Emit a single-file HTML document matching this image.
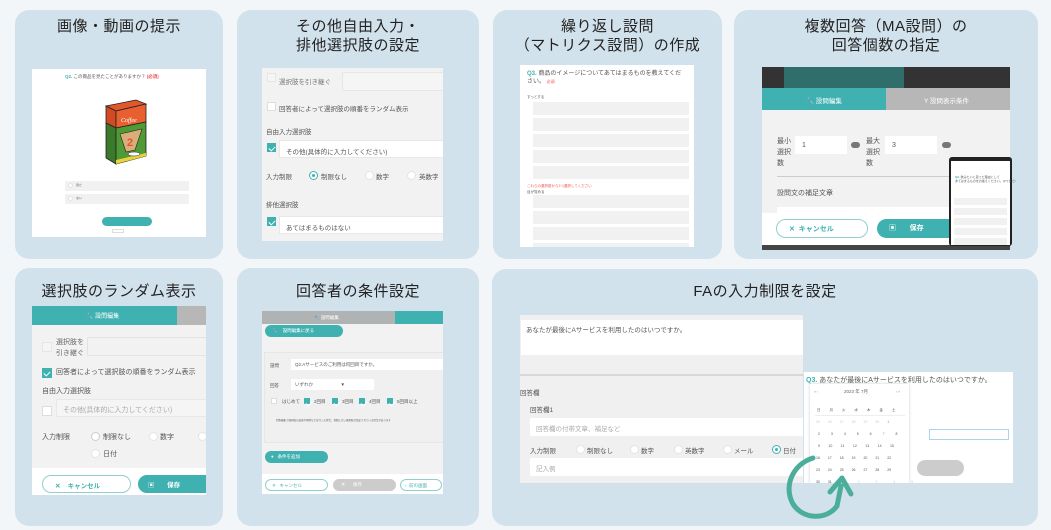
<!DOCTYPE html>
<html><head><meta charset="utf-8">
<style>
*{margin:0;padding:0;box-sizing:border-box}
body{width:1051px;height:530px;overflow:hidden;background:#f3f6f8;font-family:"Liberation Sans","Noto Sans CJK JP",sans-serif;position:relative;color:#444}
div,span{position:absolute}
.card{background:#d2e2ec;border-radius:14px}
.t{font-size:15px;color:#222;white-space:nowrap;text-align:center;line-height:19px;letter-spacing:.5px}
.s{white-space:nowrap;color:#555}
.cb{width:9px;height:9px;border:1px solid #ddd;background:#fff}
.cbt{background:#3fb1b0;border-color:#3fb1b0}
.cbt::after{content:"";position:absolute;left:2px;top:1px;width:3px;height:5px;border:solid #fff;border-width:0 1px 1px 0;transform:rotate(45deg)}
.rd{width:9px;height:9px;border-radius:50%;background:#fff;border:1px solid #e4e4e4}
.rds{border:1px solid #3fb1b0}
.rds::after{content:"";position:absolute;left:2px;top:2px;width:3px;height:3px;border-radius:50%;background:#3fb1b0}
.in{background:#fff;border:1px solid #e8e8e8}
.row{background:#f1f1f1}
.teal{background:#3fb1b0}
</style></head><body>

<!-- cards -->
<div class="card" style="left:15px;top:10px;width:208px;height:249px"></div>
<div class="card" style="left:237px;top:10px;width:242px;height:249px"></div>
<div class="card" style="left:493px;top:10px;width:229px;height:249px"></div>
<div class="card" style="left:734px;top:10px;width:304px;height:249px"></div>
<div class="card" style="left:15px;top:268px;width:208px;height:258px"></div>
<div class="card" style="left:237px;top:268px;width:242px;height:258px"></div>
<div class="card" style="left:492px;top:269px;width:546px;height:257px"></div>

<!-- titles -->
<div class="t" style="left:15px;width:208px;top:17px">画像・動画の提示</div>
<div class="t" style="left:237px;width:242px;top:17px">その他自由入力・<br>排他選択肢の設定</div>
<div class="t" style="left:493px;width:229px;top:17px">繰り返し設問<br>（マトリクス設問）の作成</div>
<div class="t" style="left:734px;width:304px;top:17px">複数回答（MA設問）の<br>回答個数の指定</div>
<div class="t" style="left:15px;width:208px;top:282px">選択肢のランダム表示</div>
<div class="t" style="left:237px;width:242px;top:282px">回答者の条件設定</div>
<div class="t" style="left:492px;width:546px;top:282px">FAの入力制限を設定</div>

<!-- card1 content -->
<div style="left:32px;top:69px;width:174px;height:168px;background:#fff">
  <span class="s" style="left:33px;top:5px;font-size:4.5px;color:#555"><b style="color:#3fb1b0">Q2.</b> この商品を見たことがありますか？ <b style="color:#e55">(必須)</b></span>
  <svg style="position:absolute;left:70px;top:29px" width="50" height="70" viewBox="0 0 50 70">
    <polygon points="4,8 34,2 44,6 14,13" fill="#e2572c" stroke="#222" stroke-width="0.8"/>
    <polygon points="4,8 14,13 14,30 4,25" fill="#d24a22" stroke="#222" stroke-width="0.8"/>
    <polygon points="14,13 44,6 44,24 14,30" fill="#e8602f" stroke="#222" stroke-width="0.8"/>
    <text x="19" y="24" font-size="6" fill="#fff" font-style="italic" font-family="Liberation Serif">Coffee</text>
    <polygon points="4,25 14,30 14,66 4,60" fill="#3a7a2a" stroke="#222" stroke-width="0.8"/>
    <polygon points="14,30 44,24 44,58 14,66" fill="#4f9a34" stroke="#222" stroke-width="0.8"/>
    <polygon points="18,36 40,31 33,52 24,54" fill="#d9ae7a" stroke="#222" stroke-width="0.6"/>
    <text x="25" y="48" font-size="11" fill="#e2572c" font-weight="bold">2</text>
    <polygon points="14,62 44,55 44,58 14,66" fill="#e9d23a"/>
    <ellipse cx="32" cy="56" rx="6" ry="2" fill="#fff" stroke="#222" stroke-width=".5"/>
  </svg>
  <div class="row" style="left:33px;top:112px;width:124px;height:10px"><span class="rd" style="left:3px;top:2px;width:5px;height:5px"></span><span class="s" style="left:11px;top:2px;font-size:3px">見た</span></div>
  <div class="row" style="left:33px;top:125px;width:124px;height:10px"><span class="rd" style="left:3px;top:2px;width:5px;height:5px"></span><span class="s" style="left:11px;top:2px;font-size:3px">ない</span></div>
  <div class="teal" style="left:70px;top:148px;width:50px;height:9px;border-radius:5px"></div>
  <div style="left:80px;top:160px;width:12px;height:4px;border:1px solid #ddd"></div>
</div>

<!-- card2 content -->
<div style="left:262px;top:68px;width:181px;height:173px;background:#f2f2f2;overflow:hidden;font-size:6.5px">
  <span class="cb" style="left:5px;top:5px;border-color:#e6e6e6;background:#f5f5f5"></span>
  <span class="s" style="left:17px;top:8px;color:#777">選択肢を引き継ぐ</span>
  <span style="left:80px;top:4px;width:110px;height:19px;border:1px solid #e6e6e6;border-radius:2px;background:#f5f5f5"></span>
  <span class="cb" style="left:5px;top:34px"></span>
  <span class="s" style="left:17px;top:35px">回答者によって選択肢の順番をランダム表示</span>
  <span class="s" style="left:4px;top:58px">自由入力選択肢</span>
  <span class="cb cbt" style="left:5px;top:75px"></span>
  <span class="in" style="left:17px;top:72px;width:170px;height:18px"></span>
  <span class="s" style="left:24px;top:78px">その他(具体的に入力してください)</span>
  <span class="s" style="left:4px;top:103px">入力制限</span>
  <span class="rd rds" style="left:47px;top:103px"></span><span class="s" style="left:59px;top:103px">制限なし</span>
  <span class="rd" style="left:103px;top:103px"></span><span class="s" style="left:114px;top:103px">数字</span>
  <span class="rd" style="left:145px;top:103px"></span><span class="s" style="left:157px;top:103px">英数字</span>
  <span class="s" style="left:4px;top:131px">排他選択肢</span>
  <span class="cb cbt" style="left:5px;top:149px"></span>
  <span class="in" style="left:17px;top:148px;width:170px;height:18px"></span>
  <span class="s" style="left:24px;top:154px">あてはまるものはない</span>
</div>

<!-- card3 content -->
<div style="left:520px;top:65px;width:174px;height:182px;background:#fff;overflow:hidden;font-size:5.5px">
  <span class="s" style="left:7px;top:3px;font-size:6px"><b style="color:#3fb1b0">Q3.</b> 商品のイメージについてあてはまるものを教えてくだ</span>
  <span class="s" style="left:7px;top:11px;font-size:6px">さい。 <span style="position:static;color:#e55;font-size:4px">必須</span></span>
  <span class="s" style="left:7px;top:30px;font-size:3.5px">すっとする</span>
  <div class="row" style="left:13px;top:37px;width:156px;height:13px"></div>
  <div class="row" style="left:13px;top:53px;width:156px;height:13px"></div>
  <div class="row" style="left:13px;top:69px;width:156px;height:13px"></div>
  <div class="row" style="left:13px;top:85px;width:156px;height:13px"></div>
  <div class="row" style="left:13px;top:101px;width:156px;height:13px"></div>
  <span class="s" style="left:7px;top:119px;font-size:3.5px;color:#e55">これらの選択肢から2つ選択してください</span>
  <span class="s" style="left:7px;top:125px;font-size:3.5px">目が覚める</span>
  <div class="row" style="left:13px;top:130px;width:156px;height:13px"></div>
  <div class="row" style="left:13px;top:146px;width:156px;height:13px"></div>
  <div class="row" style="left:13px;top:162px;width:156px;height:13px"></div>
  <div class="row" style="left:13px;top:178px;width:156px;height:13px"></div>
</div>
<div style="left:533px;top:102px;width:1px;height:1px">
</div>

<!-- card4 content -->
<div style="left:762px;top:67px;width:248px;height:183px;background:#f2f2f2;overflow:hidden;font-size:7px">
  <div style="left:0;top:0;width:248px;height:22px;background:#333"></div>
  <div style="left:22px;top:0;width:120px;height:22px;background:#2f6e6a"></div>
  <div style="left:0;top:21px;width:124px;height:22px" class="teal"><span style="left:44px;top:7px;color:#fff;font-size:6.5px">🔧 設問編集</span></div>
  <div style="left:124px;top:21px;width:124px;height:22px;background:#b7b7b7"><span style="left:38px;top:7px;color:#fff;font-size:6.5px">Y 設問表示条件</span></div>
  <span class="s" style="left:15px;top:69px;line-height:11px">最小<br>選択<br>数</span>
  <span class="in" style="left:33px;top:69px;width:52px;height:18px;border:none"></span><span class="s" style="left:40px;top:75px">1</span>
  <span style="left:89px;top:75px;width:9px;height:6px;border-radius:3px;background:#777"></span>
  <span class="s" style="left:104px;top:69px;line-height:11px">最大<br>選択<br>数</span>
  <span class="in" style="left:123px;top:69px;width:52px;height:18px;border:none"></span><span class="s" style="left:130px;top:75px">3</span>
  <span style="left:180px;top:75px;width:9px;height:6px;border-radius:3px;background:#777"></span>
  <div style="left:15px;top:109px;width:233px;height:1px;background:#ccc"></div>
  <span class="s" style="left:15px;top:121px">設問文の補足文章</span>
  <div style="left:15px;top:140px;width:233px;height:10px;background:#fff"></div>
  <div style="left:0;top:146px;width:248px;height:32px;background:#fff"></div>
  <div style="left:14px;top:152px;width:92px;height:19px;border:1px solid #8fd0cf;border-radius:10px"><span style="left:12px;top:4px;color:#3fb1b0;font-weight:bold;font-size:7px">✕ &nbsp;キャンセル</span></div>
  <div class="teal" style="left:115px;top:152px;width:90px;height:19px;border-radius:10px"><span style="left:12px;top:4px;color:#fff;font-weight:bold;font-size:7px">▣ &nbsp; &nbsp; &nbsp; 保存</span></div>
  <div style="left:0;top:178px;width:248px;height:5px;background:#444"></div>
</div>
<div style="left:949px;top:157px;width:63px;height:89px;background:#222;border-radius:3px">
  <div style="left:2px;top:4px;width:59px;height:84px;background:#fff;font-size:3px">
    <span class="s" style="left:4px;top:14px;line-height:4px"><b style="color:#3fb1b0">Q2.</b> 飲みたいと思った理由として<br>あてはまるものをお答えください。(3つまで)</span>
    <div class="row" style="left:3px;top:37px;width:53px;height:7px"></div>
    <div class="row" style="left:3px;top:47px;width:53px;height:7px"></div>
    <div class="row" style="left:3px;top:57px;width:53px;height:7px"></div>
    <div class="row" style="left:3px;top:67px;width:53px;height:7px"></div>
    <div class="row" style="left:3px;top:77px;width:53px;height:7px"></div>
  </div>
</div>

<!-- card5 content -->
<div style="left:32px;top:306px;width:174px;height:189px;background:#f2f2f2;overflow:hidden;font-size:7px">
  <div class="teal" style="left:0;top:0;width:145px;height:19px"><span style="left:54px;top:5px;color:#fff;font-size:6px">🔧 設問編集</span></div>
  <div style="left:145px;top:0;width:29px;height:19px;background:#b7b7b7"></div>
  <span class="cb" style="left:10px;top:36px;border-color:#e6e6e6;background:#f5f5f5;width:10px;height:10px"></span>
  <span class="s" style="left:24px;top:31px;line-height:11px;color:#666">選択肢を<br>引き継ぐ</span>
  <span style="left:55px;top:31px;width:130px;height:19px;border:1px solid #e3e3e3;border-radius:2px"></span>
  <span class="cb cbt" style="left:10px;top:62px;width:10px;height:10px"></span>
  <span class="s" style="left:24px;top:61px">回答者によって選択肢の順番をランダム表示</span>
  <span class="s" style="left:10px;top:80px">自由入力選択肢</span>
  <span class="cb" style="left:10px;top:100px;width:10px;height:10px"></span>
  <span class="in" style="left:24px;top:93px;width:155px;height:18px;background:#f5f5f5"></span>
  <span class="s" style="left:31px;top:99px;color:#aaa">その他(具体的に入力してください)</span>
  <span class="s" style="left:10px;top:126px">入力制限</span>
  <span class="rd" style="left:59px;top:126px;border-color:#ccc"></span><span class="s" style="left:71px;top:126px">制限なし</span>
  <span class="rd" style="left:117px;top:126px"></span><span class="s" style="left:128px;top:126px">数字</span>
  <span class="rd" style="left:166px;top:126px"></span>
  <span class="rd" style="left:59px;top:143px"></span><span class="s" style="left:71px;top:143px">日付</span>
  <div style="left:0;top:162px;width:174px;height:27px;background:#fff"></div>
  <div style="left:10px;top:169px;width:89px;height:18px;border:1px solid #8fd0cf;border-radius:9px"><span style="left:12px;top:4px;color:#3fb1b0;font-weight:bold;font-size:6.5px">✕ &nbsp; &nbsp;キャンセル</span></div>
  <div class="teal" style="left:106px;top:169px;width:80px;height:18px;border-radius:9px"><span style="left:10px;top:4px;color:#fff;font-weight:bold;font-size:6.5px">▣ &nbsp; &nbsp; &nbsp; 保存</span></div>
</div>

<!-- card6 content -->
<div style="left:262px;top:311px;width:181px;height:183px;background:#f2f2f2;overflow:hidden;font-size:4.5px">
  <div style="left:0;top:0;width:133px;height:13px;background:#b0b3b3"><span style="left:52px;top:4px;color:#fff">🔧 設問編集</span></div>
  <div class="teal" style="left:133px;top:0;width:48px;height:13px"></div>
  <div class="teal" style="left:3px;top:14px;width:78px;height:12px;border-radius:6px"><span style="left:7px;top:3px;color:#fff">🔧 &nbsp; &nbsp;設問編集に戻る</span></div>
  <div style="left:2px;top:41px;width:181px;height:91px;border:1px solid #e6e6e6;background:#f0f0f0"></div>
  <span class="s" style="left:8px;top:52px">設問</span>
  <span class="in" style="left:29px;top:48px;width:155px;height:11px;border:none"></span><span class="s" style="left:33px;top:51px">Q2.Aサービスのご利用は何回目ですか。</span>
  <span class="s" style="left:8px;top:72px">回答</span>
  <span class="in" style="left:29px;top:68px;width:83px;height:11px;border:none"></span><span class="s" style="left:33px;top:71px">いずれか &nbsp; &nbsp; &nbsp; &nbsp; &nbsp; &nbsp; &nbsp; &nbsp; &nbsp; &nbsp; &nbsp;▼</span>
  <span class="cb" style="left:9px;top:87px;width:6px;height:6px"></span><span class="s" style="left:20px;top:88px">はじめて</span>
  <span class="cb cbt" style="left:42px;top:87px;width:6px;height:6px"></span><span class="s" style="left:52px;top:88px">2回目</span>
  <span class="cb cbt" style="left:70px;top:87px;width:6px;height:6px"></span><span class="s" style="left:80px;top:88px">3回目</span>
  <span class="cb cbt" style="left:97px;top:87px;width:6px;height:6px"></span><span class="s" style="left:107px;top:88px">4回目</span>
  <span class="cb cbt" style="left:125px;top:87px;width:6px;height:6px"></span><span class="s" style="left:135px;top:88px">5回目以上</span>
  <span class="s" style="left:14px;top:107px;font-size:2.5px">回答編集で選択肢の変更や削除などを行った場合、意図しない選択肢が設定されている場合があります</span>
  <div class="teal" style="left:3px;top:140px;width:63px;height:12px;border-radius:6px"><span style="left:6px;top:3px;color:#fff">● &nbsp; 条件を追加</span></div>
  <div style="left:0;top:163px;width:181px;height:20px;background:#fff"></div>
  <div style="left:3px;top:168px;width:63px;height:12px;border:1px solid #8fd0cf;border-radius:6px"><span style="left:6px;top:3px;color:#3fb1b0">✕ &nbsp; キャンセル</span></div>
  <div style="left:71px;top:168px;width:63px;height:12px;background:#ccc;border-radius:6px"><span style="left:8px;top:3px;color:#fff">▣ &nbsp; &nbsp; &nbsp;保存</span></div>
  <div style="left:138px;top:168px;width:42px;height:12px;border:1px solid #8fd0cf;border-radius:6px"><span style="left:4px;top:3px;color:#3fb1b0">‹ &nbsp;前の画面</span></div>
</div>

<!-- card7 content -->
<div style="left:520px;top:315px;width:283px;height:168px;background:#f0f0f0;overflow:hidden;font-size:6.5px">
  <div style="left:1px;top:5px;width:282px;height:35px;background:#fff"></div>
  <span class="s" style="left:6px;top:9px">あなたが最後にAサービスを利用したのはいつですか。</span>
  <div style="left:0;top:59px;width:283px;height:2px;background:#d8d8d8"></div>
  <span class="s" style="left:0;top:72px">回答欄</span>
  <span class="s" style="left:10px;top:89px">回答欄1</span>
  <span class="in" style="left:10px;top:103px;width:275px;height:18px;border:none"></span>
  <span class="s" style="left:16px;top:108px;color:#aaa">回答欄の付帯文章、補足など</span>
  <span class="s" style="left:10px;top:130px">入力制限</span>
  <span class="rd" style="left:56px;top:130px"></span><span class="s" style="left:67px;top:130px">制限なし</span>
  <span class="rd" style="left:110px;top:130px"></span><span class="s" style="left:121px;top:130px">数字</span>
  <span class="rd" style="left:154px;top:130px"></span><span class="s" style="left:165px;top:130px">英数字</span>
  <span class="rd" style="left:203px;top:130px"></span><span class="s" style="left:214px;top:130px">メール</span>
  <span class="rd rds" style="left:252px;top:130px"></span><span class="s" style="left:263px;top:130px">日付</span>
  <span class="in" style="left:10px;top:143px;width:275px;height:18px;border:none"></span>
  <span class="s" style="left:16px;top:148px;color:#aaa">記入例</span>
</div>
<div style="left:804px;top:372px;width:209px;height:111px;background:#fff;overflow:hidden;font-size:7px">
  <span class="s" style="left:2px;top:3px"><b style="color:#3fb1b0">Q3.</b> あなたが最後にAサービスを利用したのはいつですか。</span>
  <div style="left:125px;top:57px;width:80px;height:11px;border:1px solid #aad4ee"></div>
  <div style="left:113px;top:88px;width:47px;height:16px;border-radius:8px;background:#ccc"></div>
  <div style="left:6px;top:12px;width:99px;height:100px;background:#fff;box-shadow:0 0 3px rgba(0,0,0,.2);font-size:3.5px;color:#888">
    <span class="s" style="left:4px;top:6px;color:#999">« ‹</span>
    <span class="s" style="left:34px;top:5px;font-size:4.5px;color:#666">2023 年 7月</span>
    <span class="s" style="left:86px;top:6px;color:#999">› »</span>
    <span class="s" style="left:7px;top:24px;word-spacing:8px">日 月 火 水 木 金 土</span>
    <div style="left:5px;top:31px;width:90px;height:1px;background:#eee"></div>
    <span class="s" style="left:6px;top:36px;color:#ccc;word-spacing:7px">25 26 27 28 29 30 <span style="position:static;color:#888">1</span></span>
    <span class="s" style="left:8px;top:48px;word-spacing:10px">2 3 4 5 6 <span style="position:static;color:#4a9ee0">7</span> 8</span>
    <span class="s" style="left:8px;top:60px;word-spacing:7.5px">9 10 11 12 13 14 15</span>
    <span class="s" style="left:6px;top:72px;word-spacing:7px">16 17 18 19 20 21 22</span>
    <span class="s" style="left:6px;top:84px;word-spacing:7px">23 24 25 26 27 28 29</span>
    <span class="s" style="left:6px;top:96px;word-spacing:7px">30 31 <span style="position:static;color:#ccc">1 &nbsp;2 &nbsp;3 &nbsp;4 &nbsp;5</span></span>
  </div>
</div>
<svg style="position:absolute;left:775px;top:450px" width="80" height="75" viewBox="0 0 80 75">
  <path d="M38 8 C18 14 8 36 18 54 C28 70 52 70 62 56 L66 36" fill="none" stroke="#4aae9b" stroke-width="5" stroke-linecap="round"/>
  <path d="M55 42 L67 28 L76 44" fill="none" stroke="#4aae9b" stroke-width="5" stroke-linecap="round" stroke-linejoin="round"/>
</svg>
</body></html>
